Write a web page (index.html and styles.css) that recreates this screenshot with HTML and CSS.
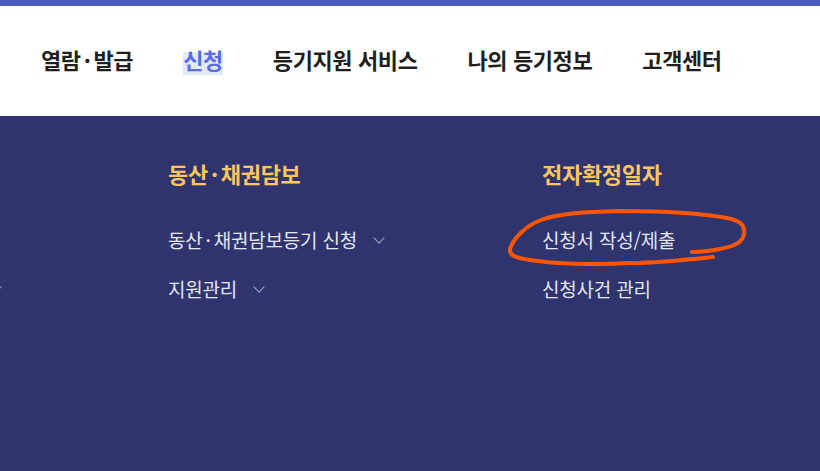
FILE: index.html
```html
<!DOCTYPE html>
<html lang="ko">

<head>
    <meta charset="UTF-8">
    <meta name="viewport" content="width=device-width, initial-scale=1.0">
    <title>신청</title>
    <link rel="stylesheet" href="styles.css">
</head>

<body>
    <div class="top-bar"></div>
    <header class="header">
        <nav class="gnb">
            <a class="gnb-item">열람<span class="dot">·</span>발급</a>
            <a class="gnb-item active"><span>신청</span></a>
            <a class="gnb-item">등기지원 서비스</a>
            <a class="gnb-item">나의 등기정보</a>
            <a class="gnb-item">고객센터</a>
        </nav>
    </header>

    <section class="submenu">
        <div class="columns">
            <div class="column column-edge">
                <ul>
                    <li></li>
                    <li><span class="chevron"></span></li>
                </ul>
            </div>
            <div class="column">
                <h3>동산<span class="dot">·</span>채권담보</h3>
                <ul>
                    <li>동산<span class="dot">·</span>채권담보등기 신청 <span class="chevron"></span></li>
                    <li>지원관리 <span class="chevron"></span></li>
                </ul>
            </div>
            <div class="column">
                <h3>전자확정일자</h3>
                <ul>
                    <li class="marked">신청서 작성/제출
                        <svg class="scribble" width="250" height="70" viewBox="0 0 250 70">
                            <path d="M208 50 C 180 53, 150 56, 125 56 C 90 58, 50 57, 25 53 C 10 51, 4 48, 5 42 C 8 32, 20 19, 36 13 C 55 6, 80 5, 115 4 C 150 4, 190 5, 222 11 C 237 14, 240 19, 239 27 C 238 35, 230 39, 215 42 C 205 44, 195 45, 187 45"
                                fill="none" stroke="#ff5500" stroke-width="4" stroke-linecap="round" stroke-linejoin="round" />
                        </svg>
                    </li>
                    <li>신청사건 관리</li>
                </ul>
            </div>
        </div>
    </section>
</body>

</html>
```

FILE: styles.css
```css
* {
    margin: 0;
    padding: 0;
    box-sizing: border-box;
    font-family: 'Noto Sans CJK KR', 'Noto Sans', sans-serif;
}

body {
    width: 820px;
    height: 471px;
    overflow: hidden;
    background-color: #2f346e;
}

.top-bar {
    height: 6px;
    background-color: #4a5bc4;
}

.header {
    height: 110px;
    background-color: #ffffff;
    display: flex;
    align-items: center;
}

.gnb {
    display: flex;
    gap: 50px;
    padding-left: 41px;
    margin-top: -5px;
}

.gnb-item {
    font-size: 22px;
    font-weight: bold;
    color: #1f1f1f;
    letter-spacing: -0.4px;
    text-decoration: none;
}

.gnb-item.active {
    color: #5a6bea;
}

.gnb-item.active span {
    background: linear-gradient(transparent 28%, #e1eaf7 28%);
}

.dot {
    margin: 0 3px;
}

.submenu {
    height: 355px;
    background-color: #2f346e;
    overflow: hidden;
}

.columns {
    display: flex;
    padding-top: 42px;
}

.column {
    width: 374px;
    flex-shrink: 0;
}

.column-edge {
    width: 168px;
    padding-top: 68px;
}

.column-edge .chevron {
    margin-left: -8px;
}

.column h3 {
    font-size: 22px;
    font-weight: bold;
    color: #ffc55f;
    letter-spacing: -0.3px;
    line-height: 30px;
    margin-bottom: 38px;
}

.column h3 .dot {
    margin: 0 3px;
}

.column ul {
    list-style: none;
    display: flex;
    flex-direction: column;
    gap: 21px;
}

.column li {
    font-size: 19px;
    color: #e3e5f0;
    line-height: 28px;
    height: 28px;
    letter-spacing: -0.2px;
    display: flex;
    align-items: center;
}

.column li .dot {
    margin: 0 3px;
}

.chevron {
    width: 8px;
    height: 8px;
    border-right: 1.5px solid #9ea2c6;
    border-bottom: 1.5px solid #9ea2c6;
    transform: rotate(45deg);
    margin-left: 18px;
    margin-top: -5px;
}

.marked {
    position: relative;
}

.scribble {
    position: absolute;
    left: -37px;
    top: -19px;
}
```
